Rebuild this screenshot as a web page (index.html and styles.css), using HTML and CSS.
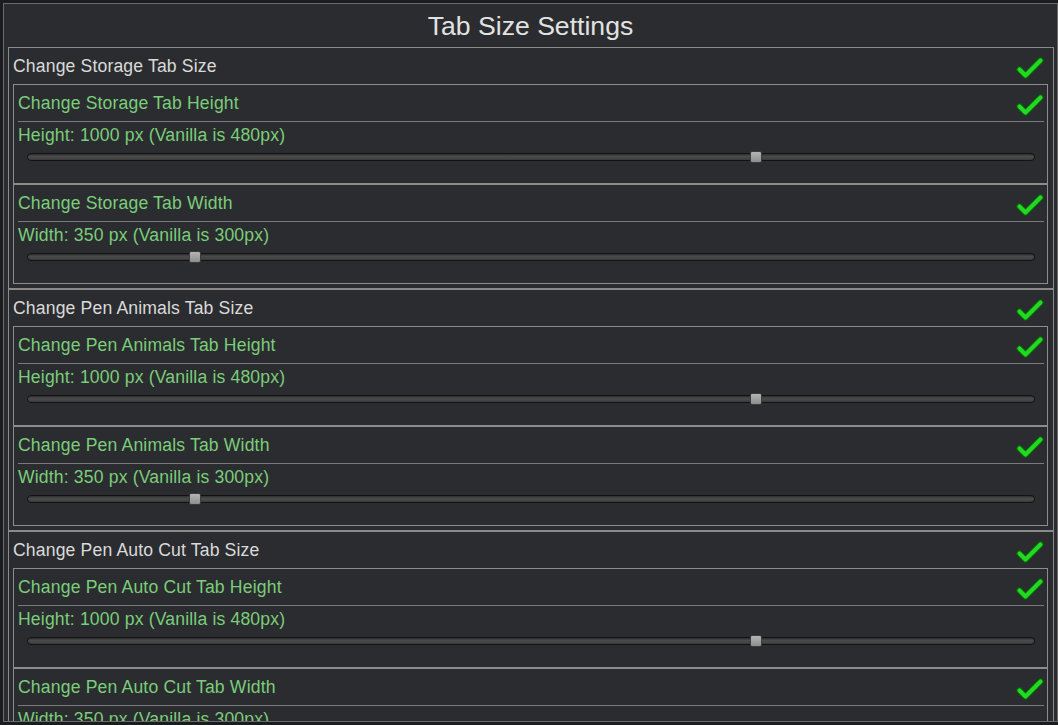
FILE: index.html
```html
<!DOCTYPE html>
<html>
<head>
<meta charset="utf-8">
<title>Tab Size Settings</title>
<link rel="stylesheet" href="styles.css">
</head>
<body>
<svg class="defs" width="0" height="0" aria-hidden="true">
  <symbol id="chk" viewBox="0 0 28 24">
    <polyline points="3.5,13.5 9.5,19.5 24.5,4.5" fill="none" stroke="#0b5e0b" stroke-width="6.5" stroke-linecap="round" stroke-linejoin="round"/>
    <polyline points="3.5,13.5 9.5,19.5 24.5,4.5" fill="none" stroke="#22d822" stroke-width="4.2" stroke-linecap="round" stroke-linejoin="round"/>
  </symbol>
</svg>
<div class="window">
  <div class="title">Tab Size Settings</div>
  <div class="list">

    <div class="section">
      <div class="sec-head"><span>Change Storage Tab Size</span><svg class="check"><use href="#chk"/></svg></div>
      <div class="opt">
        <div class="opt-head"><span>Change Storage Tab Height</span><svg class="check"><use href="#chk"/></svg></div>
        <div class="rule"></div>
        <div class="value">Height: 1000 px (Vanilla is 480px)</div>
        <div class="slider"><div class="knob" style="left:72.4%"></div></div>
      </div>
      <div class="opt">
        <div class="opt-head"><span>Change Storage Tab Width</span><svg class="check"><use href="#chk"/></svg></div>
        <div class="rule"></div>
        <div class="value">Width: 350 px (Vanilla is 300px)</div>
        <div class="slider"><div class="knob" style="left:16.6%"></div></div>
      </div>
    </div>

    <div class="section">
      <div class="sec-head"><span>Change Pen Animals Tab Size</span><svg class="check"><use href="#chk"/></svg></div>
      <div class="opt">
        <div class="opt-head"><span>Change Pen Animals Tab Height</span><svg class="check"><use href="#chk"/></svg></div>
        <div class="rule"></div>
        <div class="value">Height: 1000 px (Vanilla is 480px)</div>
        <div class="slider"><div class="knob" style="left:72.4%"></div></div>
      </div>
      <div class="opt">
        <div class="opt-head"><span>Change Pen Animals Tab Width</span><svg class="check"><use href="#chk"/></svg></div>
        <div class="rule"></div>
        <div class="value">Width: 350 px (Vanilla is 300px)</div>
        <div class="slider"><div class="knob" style="left:16.6%"></div></div>
      </div>
    </div>

    <div class="section">
      <div class="sec-head"><span>Change Pen Auto Cut Tab Size</span><svg class="check"><use href="#chk"/></svg></div>
      <div class="opt">
        <div class="opt-head"><span>Change Pen Auto Cut Tab Height</span><svg class="check"><use href="#chk"/></svg></div>
        <div class="rule"></div>
        <div class="value">Height: 1000 px (Vanilla is 480px)</div>
        <div class="slider"><div class="knob" style="left:72.4%"></div></div>
      </div>
      <div class="opt">
        <div class="opt-head"><span>Change Pen Auto Cut Tab Width</span><svg class="check"><use href="#chk"/></svg></div>
        <div class="rule"></div>
        <div class="value">Width: 350 px (Vanilla is 300px)</div>
        <div class="slider"><div class="knob" style="left:16.6%"></div></div>
      </div>
    </div>

  </div>
</div>
</body>
</html>
```
FILE: styles.css
```css
* { box-sizing: border-box; }
html, body {
  margin: 0;
  padding: 0;
  background: #1b1c1f;
  font-family: "Liberation Sans", Arial, sans-serif;
}
.defs { position: absolute; width: 0; height: 0; overflow: hidden; }

.window {
  margin: 3px 0 0 3px;
  width: 1055px;
  height: 719px;
  border: 1px solid #6a6a6a;
  background: #2b2c2f;
  overflow: hidden;
}
.title {
  height: 43px;
  display: flex;
  align-items: center;
  justify-content: center;
  color: #e2e2e2;
  font-size: 26.6px;
  padding: 2px 0 0 0;
}
.list {
  padding: 0 3px 0 4px;
}
.section {
  height: 242px;
  border: 1px solid #8a8a8a;
  padding: 0 5px 4px 4px;
}
.sec-head {
  height: 36px;
  display: flex;
  align-items: center;
  justify-content: space-between;
  color: #dadada;
  font-size: 17.6px;
  letter-spacing: 0.15px;
  padding-right: 4px;
  padding-top: 1px;
}
.check {
  width: 28px;
  height: 24px;
  flex: none;
}
.sec-head .check { margin-top: 3px; }
.opt {
  height: 100px;
  border: 1px solid #8c8c8c;
}
.opt-head {
  height: 36px;
  display: flex;
  align-items: center;
  justify-content: space-between;
  padding: 1px 3px 0 4px;
  color: #7acd7a;
  font-size: 17.6px;
  letter-spacing: 0.16px;
}
.opt-head .check { margin-top: 2px; }
.rule {
  height: 1px;
  background: #7a7a7a;
  margin: 0 3px 0 4px;
}
.value {
  height: 26px;
  display: flex;
  align-items: center;
  padding: 1px 0 0 4px;
  color: #7acd7a;
  font-size: 17.6px;
  letter-spacing: 0.16px;
}
.slider {
  position: relative;
  margin: 5px 12px 0 13px;
  height: 8px;
  border: 1px solid #121212;
  border-radius: 4px;
  background: linear-gradient(#2e2e2e, #4c4c4c 45%, #3a3a3a);
}
.knob {
  position: absolute;
  top: -3px;
  width: 12px;
  height: 12px;
  margin-left: -6px;
  border: 1px solid #3c3c3c;
  border-radius: 2px;
  background: linear-gradient(#b4b4b4, #8e8e8e);
}
```
